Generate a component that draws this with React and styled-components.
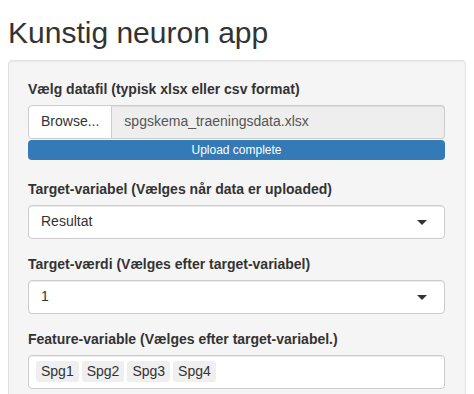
import styled, { createGlobalStyle } from 'styled-components';

const GlobalStyle = createGlobalStyle`
    html, body {
        margin: 0;
        background: #fff;
    }
    body {
        font-family: "Liberation Sans", Arial, sans-serif;
        font-size: 14px;
        line-height: 1.42857;
        color: #333;
    }
`

const features = ['Spg1', 'Spg2', 'Spg3', 'Spg4'];

const App = () => {
    return (
        <Page>
            <GlobalStyle />
            <Title>Kunstig neuron app</Title>
            <Well>
                <FormGroup gap="20px">
                    <Label>Vælg datafil (typisk xlsx eller csv format)</Label>
                    <InputGroup>
                        <BrowseButton>Browse...</BrowseButton>
                        <FileName>spgskema_traeningsdata.xlsx</FileName>
                    </InputGroup>
                    <Progress>Upload complete</Progress>
                </FormGroup>
                <FormGroup gap="16px">
                    <Label>Target-variabel (Vælges når data er uploaded)</Label>
                    <Select>
                        <span>Resultat</span>
                        <Caret />
                    </Select>
                </FormGroup>
                <FormGroup gap="16px">
                    <Label>Target-værdi (Vælges efter target-variabel)</Label>
                    <Select>
                        <span>1</span>
                        <Caret />
                    </Select>
                </FormGroup>
                <FormGroup gap="16px">
                    <Label>Feature-variable (Vælges efter target-variabel.)</Label>
                    <MultiSelect>
                        {features.map(f => <Tag key={f}>{f}</Tag>)}
                    </MultiSelect>
                </FormGroup>
            </Well>
        </Page>
    )
}

export default App

const Page = styled.div`
    padding: 0 8px;
    width: 458px;
`
const Title = styled.h2`
    margin: 16px 0 11px;
    font-size: 30px;
    font-weight: 400;
    line-height: 1.1;
    color: #333;
`
const Well = styled.div`
    background-color: #f5f5f5;
    border: 1px solid #e3e3e3;
    border-radius: 4px;
    padding: 19px 20px 19px 19px;
    box-shadow: inset 0 1px 1px rgba(0, 0, 0, .05);
`
const FormGroup = styled.div`
    display: flex;
    flex-direction: column;
    margin-bottom: ${props => props.gap};
`
const Label = styled.label`
    display: block;
    font-weight: 700;
    margin-bottom: 5px;
`
const InputGroup = styled.div`
    display: flex;
    height: 34px;
`
const BrowseButton = styled.div`
    box-sizing: border-box;
    padding: 6px 12px;
    background: #fff;
    border: 1px solid #ccc;
    border-radius: 4px 0 0 4px;
    color: #333;
    white-space: nowrap;
`
const FileName = styled.div`
    flex: 1;
    box-sizing: border-box;
    padding: 6px 12px;
    background: #eee;
    border: 1px solid #ccc;
    border-left: 0;
    border-radius: 0 4px 4px 0;
    color: #555;
    box-shadow: inset 0 1px 1px rgba(0, 0, 0, .075);
`
const Progress = styled.div`
    height: 20px;
    margin-top: 1px;
    background: #337ab7;
    border-radius: 4px;
    color: #fff;
    font-size: 12px;
    line-height: 20px;
    text-align: center;
`
const Select = styled.div`
    box-sizing: border-box;
    display: flex;
    align-items: center;
    justify-content: space-between;
    height: 34px;
    padding: 6px 17px 6px 12px;
    background: #fff;
    border: 1px solid #ccc;
    border-radius: 4px;
    color: #333;
    box-shadow: inset 0 1px 1px rgba(0, 0, 0, .075);
`
const Caret = styled.span`
    width: 0;
    height: 0;
    border-style: solid;
    border-width: 5px 5px 0 5px;
    border-color: #333 transparent transparent transparent;
    margin-top: 1px;
`
const MultiSelect = styled.div`
    box-sizing: border-box;
    display: flex;
    align-items: center;
    gap: 3px;
    height: 34px;
    padding: 0 12px 0 7px;
    background: #fff;
    border: 1px solid #ccc;
    border-radius: 4px;
    box-shadow: inset 0 1px 1px rgba(0, 0, 0, .075);
`
const Tag = styled.span`
    height: 21px;
    line-height: 21px;
    padding: 0 5px;
    background: #efefef;
    border-radius: 3px;
    color: #333;
`
